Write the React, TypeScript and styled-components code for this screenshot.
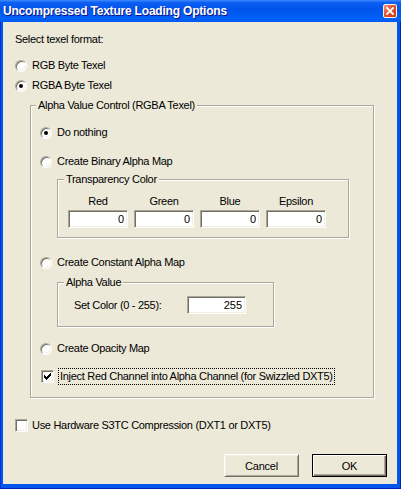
import React from "react";
import styled, { createGlobalStyle } from "styled-components";

const UI_FONT = `"Liberation Sans", Arial, sans-serif`;
const FACE = "#ECE9D8";
const SHADOW = "#ACA899";
const DARK = "#716F64";
const LIGHT = "#F1EFE2";

const GlobalStyle = createGlobalStyle`
  html, body {
    margin: 0;
    padding: 0;
    background: #ffffff;
  }
  body {
    font-family: ${UI_FONT};
  }
`;

const Window = styled.div`
  width: 401px;
  height: 489px;
  display: flex;
  flex-direction: column;
  background: #0055ea;
  box-shadow: inset 1px 0 0 #0831d9, inset -1px -1px 0 #0024b8;
  overflow: hidden;
`;

const TitleBar = styled.div`
  flex: none;
  height: 22px;
  display: flex;
  align-items: center;
  justify-content: space-between;
  padding: 0 4px 0 3px;
  background: linear-gradient(
    180deg,
    #3d8bff 0%,
    #0b5ef2 12%,
    #0054ea 45%,
    #0062f8 85%,
    #0059f0 100%
  );
`;

const TitleText = styled.span`
  color: #ffffff;
  font: bold 12px ${UI_FONT};
  letter-spacing: -0.2px;
  text-shadow: 1px 1px 0 #0f1089;
  white-space: nowrap;
`;

const CloseButton = styled.div`
  width: 14px;
  height: 14px;
  box-sizing: border-box;
  border: 1px solid #f4f1ee;
  border-radius: 2px;
  background: linear-gradient(135deg, #f29a7d 0%, #e2532c 45%, #c73b16 100%);
  display: flex;
  align-items: center;
  justify-content: center;
`;

const Body = styled.div`
  flex: 1;
  margin: 0 4px 5px 3px;
  padding: 11px 10px 0 12px;
  background: ${FACE};
  display: flex;
  flex-direction: column;
  color: #000000;
  font: 11px ${UI_FONT};
  letter-spacing: -0.3px;
`;

const Caption = styled.div`
  height: 13px;
  line-height: 13px;
  white-space: nowrap;
`;

const Option = styled.label<{ $top?: number; $indent?: number }>`
  display: flex;
  align-items: center;
  gap: 5px;
  height: 13px;
  line-height: 13px;
  margin-top: ${(p) => p.$top ?? 0}px;
  margin-left: ${(p) => p.$indent ?? 0}px;
  white-space: nowrap;
`;

const CheckOption = styled(Option)`
  gap: 4px;
`;

const Radio = styled.span<{ $checked?: boolean }>`
  position: relative;
  flex: none;
  width: 12px;
  height: 12px;
  box-sizing: border-box;
  border-radius: 50%;
  background: #ffffff;
  border: 1px solid;
  border-color: ${SHADOW} #ffffff #ffffff ${SHADOW};
  box-shadow: inset 1px 1px 0 ${DARK}, inset -1px -1px 0 ${LIGHT};

  &::after {
    content: "";
    display: ${(p) => (p.$checked ? "block" : "none")};
    position: absolute;
    left: 3px;
    top: 3px;
    width: 4px;
    height: 4px;
    border-radius: 50%;
    background: #000000;
  }
`;

const CheckBox = styled.span`
  flex: none;
  width: 13px;
  height: 13px;
  box-sizing: border-box;
  background: #ffffff;
  border: 1px solid;
  border-color: ${SHADOW} #ffffff #ffffff ${SHADOW};
  box-shadow: inset 1px 1px 0 ${DARK}, inset -1px -1px 0 ${LIGHT};
  display: flex;
  align-items: center;
  justify-content: center;
`;

const FocusText = styled.span`
  padding: 1px 1px;
  border: 1px dotted #000000;
`;

const Group = styled.div<{
  $top: number;
  $left?: number;
  $right?: number;
  $width?: number;
  $padTop: number;
  $padLeft: number;
  $padBottom: number;
}>`
  position: relative;
  margin-top: ${(p) => p.$top}px;
  margin-left: ${(p) => p.$left ?? 0}px;
  margin-right: ${(p) => p.$right ?? 0}px;
  ${(p) => (p.$width ? `width: ${p.$width}px;` : "")}
  box-sizing: border-box;
  padding: ${(p) => p.$padTop}px 0 ${(p) => p.$padBottom}px
    ${(p) => p.$padLeft}px;
  border: 1px solid ${SHADOW};
  box-shadow: inset 1px 1px 0 #ffffff, 1px 1px 0 #ffffff;
  display: flex;
  flex-direction: column;
  align-items: flex-start;
`;

/* Group caption sits over the frame's top line, like a Win32 group box */
const GroupTitle = styled.span<{ $left: number }>`
  position: absolute;
  top: -7px;
  left: ${(p) => p.$left}px;
  height: 13px;
  line-height: 13px;
  padding: 0 2px;
  background: ${FACE};
  white-space: nowrap;
`;

const ChannelGrid = styled.div`
  display: grid;
  grid-template-columns: repeat(4, 60px);
  column-gap: 6px;
  row-gap: 2px;
`;

const ChannelLabel = styled.span`
  height: 13px;
  line-height: 13px;
  text-align: center;
`;

const NumberField = styled.input<{ $width?: number }>`
  width: ${(p) => p.$width ?? 60}px;
  height: 18px;
  box-sizing: border-box;
  margin: 0;
  padding: 0 3px 0 2px;
  background: #ffffff;
  border: 1px solid;
  border-color: ${SHADOW} #ffffff #ffffff ${SHADOW};
  box-shadow: inset 1px 1px 0 ${DARK}, inset -1px -1px 0 ${LIGHT};
  font: 11px ${UI_FONT};
  color: #000000;
  text-align: right;
  outline: none;
`;

const FieldRow = styled.div`
  display: flex;
  align-items: center;
  height: 18px;
`;

const FieldLabel = styled.span`
  width: 113px;
  white-space: nowrap;
`;

const ButtonRow = styled.div`
  display: flex;
  justify-content: flex-end;
  gap: 13px;
  margin-top: 22px;
`;

const Button = styled.button<{ $default?: boolean }>`
  width: 75px;
  height: 23px;
  box-sizing: border-box;
  margin: 0;
  padding: 0;
  background: ${FACE};
  font: 11px ${UI_FONT};
  letter-spacing: -0.2px;
  color: #000000;
  border: 1px solid;
  ${(p) =>
    p.$default
      ? `
    border-color: #000000;
    box-shadow: inset 1px 1px 0 #ffffff, inset -1px -1px 0 ${DARK}, inset -2px -2px 0 ${SHADOW};
  `
      : `
    border-color: #ffffff ${DARK} ${DARK} #ffffff;
    box-shadow: inset 1px 1px 0 ${LIGHT}, inset -1px -1px 0 ${SHADOW};
  `}
`;

const CheckGlyph = () => (
  <svg width="7" height="7" viewBox="0 0 7 7" shapeRendering="crispEdges">
    <path
      d="M6 0h1v3h-1v1h-1v1h-1v1h-1v1h-1v-1h-1v-1h-1v-3h1v1h1v1h1v-1h1v-1h1v-1h1z"
      fill="#000"
    />
  </svg>
);

const CloseGlyph = () => (
  <svg width="8" height="8" viewBox="0 0 8 8">
    <path
      d="M1 1L7 7M7 1L1 7"
      stroke="#ffffff"
      strokeWidth="1.8"
      strokeLinecap="square"
    />
  </svg>
);

const channels = ["Red", "Green", "Blue", "Epsilon"];

export default function App() {
  return (
    <>
      <GlobalStyle />
      <Window>
        <TitleBar>
          <TitleText>Uncompressed Texture Loading Options</TitleText>
          <CloseButton>
            <CloseGlyph />
          </CloseButton>
        </TitleBar>
        <Body>
          <Caption>Select texel format:</Caption>
          <Option $top={13}>
            <Radio />
            RGB Byte Texel
          </Option>
          <Option $top={7}>
            <Radio $checked />
            RGBA Byte Texel
          </Option>

          <Group $top={13} $left={15} $right={13} $padTop={20} $padLeft={9} $padBottom={14}>
            <GroupTitle $left={5}>Alpha Value Control (RGBA Texel)</GroupTitle>
            <Option>
              <Radio $checked />
              Do nothing
            </Option>
            <Option $top={16}>
              <Radio />
              Create Binary Alpha Map
            </Option>

            <Group $top={11} $left={17} $width={292} $padTop={15} $padLeft={10} $padBottom={9}>
              <GroupTitle $left={6}>Transparency Color</GroupTitle>
              <ChannelGrid>
                {channels.map((c) => (
                  <ChannelLabel key={c}>{c}</ChannelLabel>
                ))}
                {channels.map((c) => (
                  <NumberField key={c} readOnly value="0" />
                ))}
              </ChannelGrid>
            </Group>

            <Option $top={18}>
              <Radio />
              Create Constant Alpha Map
            </Option>

            <Group $top={13} $left={17} $width={217} $padTop={13} $padLeft={16} $padBottom={12}>
              <GroupTitle $left={6}>Alpha Value</GroupTitle>
              <FieldRow>
                <FieldLabel>Set Color (0 - 255):</FieldLabel>
                <NumberField $width={59} readOnly value="255" />
              </FieldRow>
            </Group>

            <Option $top={15}>
              <Radio />
              Create Opacity Map
            </Option>
            <CheckOption $top={15} $indent={1}>
              <CheckBox>
                <CheckGlyph />
              </CheckBox>
              <FocusText>Inject Red Channel into Alpha Channel (for Swizzled DXT5)</FocusText>
            </CheckOption>
          </Group>

          <CheckOption $top={21}>
            <CheckBox />
            Use Hardware S3TC Compression (DXT1 or DXT5)
          </CheckOption>

          <ButtonRow>
            <Button>Cancel</Button>
            <Button $default>OK</Button>
          </ButtonRow>
        </Body>
      </Window>
    </>
  );
}
